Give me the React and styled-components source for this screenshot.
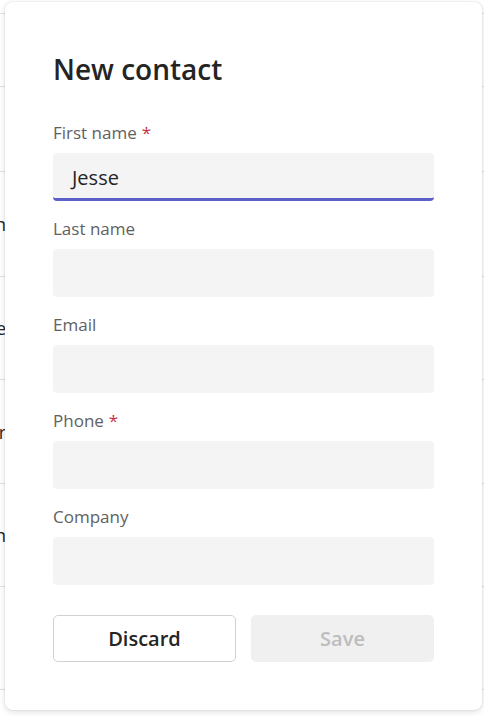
import React from "react";
import styled, { createGlobalStyle } from "styled-components";

const Global = createGlobalStyle`
  html, body { margin: 0; padding: 0; background: #ffffff; }
  body { font-family: "Segoe UI", "Open Sans", "Noto Sans", sans-serif; color: #242424; }
  * { box-sizing: border-box; }
`;

const Page = styled.div`
  position: relative;
  width: 484px;
  height: 717px;
  overflow: hidden;
  background: #ffffff;
`;

const List = styled.div`
  display: flex;
  flex-direction: column;
`;

const Row = styled.div`
  display: flex;
  align-items: center;
  height: ${(p) => p.$h}px;
  border-bottom: 1px solid #e0e0e0;
`;

const NameCell = styled.div`
  width: 6px;
  overflow: hidden;
  display: flex;
  justify-content: flex-end;
  white-space: nowrap;
  font-size: 18px;
  color: #242424;
`;

const Dialog = styled.div`
  position: absolute;
  left: 5px;
  top: 2px;
  width: 477px;
  background: #ffffff;
  border-radius: 8px;
  box-shadow: 0 0 2px rgba(0, 0, 0, 0.14), 0 2px 6px rgba(0, 0, 0, 0.12);
  padding: 48px;
  display: flex;
  flex-direction: column;
`;

const Title = styled.h2`
  margin: 0 0 35px;
  font-size: 28px;
  line-height: 38px;
  font-weight: 600;
  color: #242424;
`;

const Fields = styled.div`
  display: flex;
  flex-direction: column;
  gap: 18px;
`;

const Field = styled.div`
  display: flex;
  flex-direction: column;
  gap: 10px;
`;

const Label = styled.label`
  font-size: 17px;
  line-height: 20px;
  color: #616161;
`;

const Required = styled.span`
  color: #c4314b;
  margin-left: 5px;
`;

const Input = styled.div`
  height: 48px;
  background: #f4f4f4;
  border-radius: 4px;
  border-bottom: 3px solid ${(p) => (p.$focused ? "#5b5fc7" : "transparent")};
  padding: 3px 19px 0;
  display: flex;
  align-items: center;
  font-size: 20px;
  color: #242424;
`;

const Actions = styled.div`
  display: grid;
  grid-template-columns: 1fr 1fr;
  gap: 15px;
  margin-top: 30px;
`;

const Button = styled.button`
  height: 47px;
  border-radius: 5px;
  font-family: inherit;
  font-size: 20px;
  font-weight: 600;
  border: 1px solid ${(p) => (p.$disabled ? "#f0f0f0" : "#d1d1d1")};
  background: ${(p) => (p.$disabled ? "#f0f0f0" : "#ffffff")};
  color: ${(p) => (p.$disabled ? "#bdbdbd" : "#242424")};
  padding: 0;
`;

const rows = [
  { h: 14, name: "" },
  { h: 73, name: "" },
  { h: 85, name: "" },
  { h: 105, name: "Jordan" },
  { h: 103, name: "Jane" },
  { h: 104, name: "Parker" },
  { h: 103, name: "Morgan" },
  { h: 103, name: "" },
];

const fields = [
  { label: "First name", required: true, value: "Jesse", focused: true },
  { label: "Last name" },
  { label: "Email" },
  { label: "Phone", required: true },
  { label: "Company" },
];

export default function App() {
  return (
    <Page>
      <Global />
      <List>
        {rows.map((r, i) => (
          <Row key={i} $h={r.h}>
            <NameCell>{r.name}</NameCell>
          </Row>
        ))}
      </List>
      <Dialog>
        <Title>New contact</Title>
        <Fields>
          {fields.map((f) => (
            <Field key={f.label}>
              <Label>
                {f.label}
                {f.required && <Required>*</Required>}
              </Label>
              <Input $focused={f.focused}>{f.value || ""}</Input>
            </Field>
          ))}
        </Fields>
        <Actions>
          <Button>Discard</Button>
          <Button $disabled>Save</Button>
        </Actions>
      </Dialog>
    </Page>
  );
}
